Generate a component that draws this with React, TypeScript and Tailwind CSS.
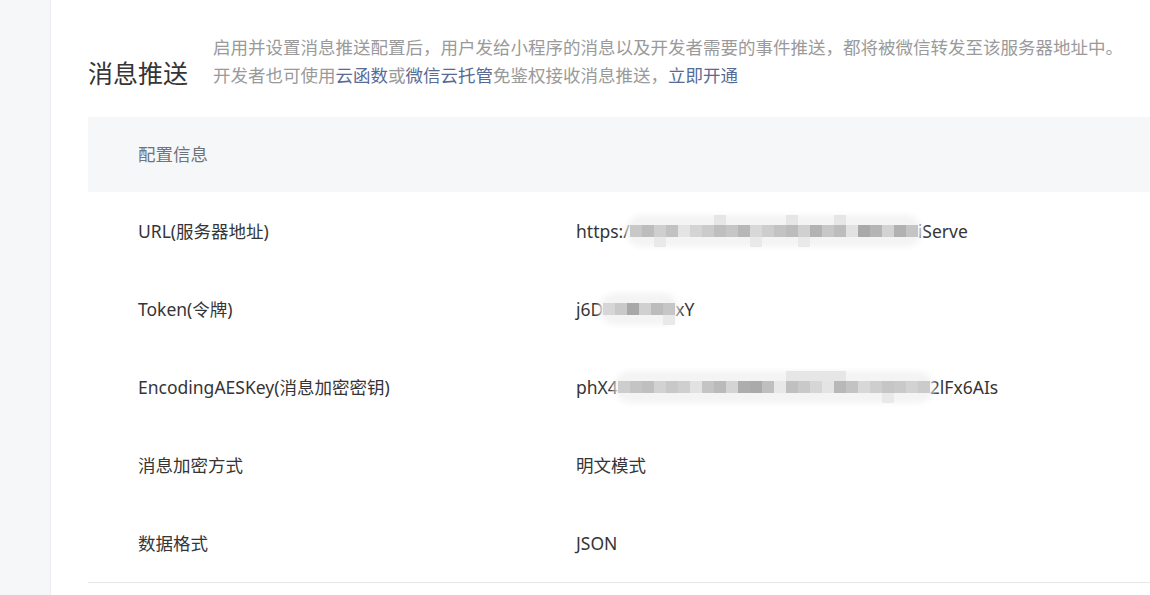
import React from 'react';

const font = { fontFamily: '"Noto Sans", "Noto Sans CJK SC", sans-serif' };

// pixelated blur used to hide secrets
const Mosaic = ({ cells, top = [], bottom = [] }: { cells: string[]; top?: number[]; bottom?: number[] }) => (
  <span className="relative inline-flex h-[24px] items-center rounded-full bg-[#f4f4f4] align-middle shadow-[0_0_6px_4px_#f4f4f4]">
    {cells.map((c, i) => (
      <span key={i} className="relative h-[12px] w-[12px]" style={{ background: c }}>
        {top.includes(i) && <span className="absolute -top-[10px] left-0 h-[10px] w-[12px] bg-[#e6e6e6]" />}
        {bottom.includes(i) && <span className="absolute -bottom-[10px] left-0 h-[10px] w-[12px] bg-[#e9e9e9]" />}
      </span>
    ))}
  </span>
);

const urlCells = ['#c8c8c8', '#bdbdbd', '#cfcfcf', '#c2c2c2', '#e4e4e4', '#d4d4d4', '#cbcbcb', '#bfbfbf', '#c6c6c6', '#b7b7b7', '#d8d8d8', '#cdcdcd', '#c3c3c3', '#bcbcbc', '#d0d0d0', '#b3b3b3', '#c7c7c7', '#bdbdbd', '#e2e2e2', '#a9a9a9', '#b5b5b5', '#d3d3d3', '#b1b1b1', '#c4c4c4'];
const tokenCells = ['#d6d6d6', '#c9c9c9', '#a8a8a8', '#d0d0d0', '#bcbcbc', '#c6c6c6'];
const aesCells = ['#cdcdcd', '#c4c4c4', '#bfbfbf', '#d2d2d2', '#c8c8c8', '#cfcfcf', '#e2e2e2', '#c4c4c4', '#bababa', '#d4d4d4', '#adadad', '#aaaaaa', '#bfbfbf', '#e8e8e8', '#c0c0c0', '#c9c9c9', '#d6d6d6', '#e4e4e4', '#b8b8b8', '#c3c3c3', '#d8d8d8', '#cecece', '#c6c6c6', '#c9c9c9', '#d2d2d2', '#cbcbcb'];

const rows: { label: string; value: React.ReactNode }[] = [
  {
    label: 'URL(服务器地址)',
    value: (
      <>
        https:/
        <Mosaic cells={urlCells} top={[7, 13, 17]} bottom={[2, 10, 14]} />
        iServe
      </>
    ),
  },
  {
    label: 'Token(令牌)',
    value: (
      <>
        j6D
        <Mosaic cells={tokenCells} bottom={[5]} />
        xY
      </>
    ),
  },
  {
    label: 'EncodingAESKey(消息加密密钥)',
    value: (
      <>
        phX4
        <Mosaic cells={aesCells} top={[14, 15, 16, 17, 18]} bottom={[22]} />
        2lFx6AIs
      </>
    ),
  },
  { label: '消息加密方式', value: '明文模式' },
  { label: '数据格式', value: 'JSON' },
];

export default function App() {
  return (
    <div className="flex h-[595px] w-[1150px] overflow-hidden bg-white text-[17.5px] text-[#353535]" style={font}>
      <aside className="w-[51px] shrink-0 border-r border-[#ebedf0] bg-[#f6f7f9]" />

      <main className="flex-1 pl-[37px]">
        <div className="flex items-start pt-[33px]">
          <h2 className="mt-[26px] w-[125px] shrink-0 text-[25px] leading-[28px] font-normal text-[#353535]">消息推送</h2>
          <p className="leading-[28px] text-[#9a9a9a]">
            启用并设置消息推送配置后，用户发给小程序的消息以及开发者需要的事件推送，都将被微信转发至该服务器地址中。
            <br />
            开发者也可使用<a className="text-[#576b95]">云函数</a>或<a className="text-[#576b95]">微信云托管</a>免鉴权接收消息推送，<a className="text-[#576b95]">立即开通</a>
          </p>
        </div>

        <div className="mt-[28px] border-b border-[#e7e7e7]">
          <div className="flex h-[75px] items-center bg-[#f6f7f9] pl-[50px] text-[#6f747c]">配置信息</div>
          {rows.map((r) => (
            <div key={r.label} className="flex h-[78px] items-center">
              <div className="w-[488px] shrink-0 pl-[50px]">{r.label}</div>
              <div className="flex items-center">{r.value}</div>
            </div>
          ))}
        </div>
      </main>
    </div>
  );
}
